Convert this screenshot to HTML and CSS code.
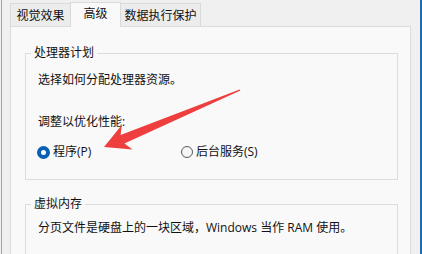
FILE: index.html
```html
<!DOCTYPE html>
<html lang="zh-CN">
<head>
<meta charset="utf-8">
<title>性能选项</title>
<link rel="stylesheet" href="styles.css">
</head>
<body>
<div class="window">
  <div class="tabs">
    <div class="tab tab-a">视觉效果</div>
    <div class="tab tab-b selected">高级</div>
    <div class="tab tab-c">数据执行保护</div>
  </div>
  <div class="panel">
    <fieldset class="group group-cpu">
      <legend>处理器计划</legend>
      <p class="desc">选择如何分配处理器资源。</p>
      <p class="label">调整以优化性能:</p>
      <div class="radios">
        <div class="radio first"><span class="dot checked"></span><span>程序(P)</span></div>
        <div class="radio"><span class="dot"></span><span>后台服务(S)</span></div>
      </div>
    </fieldset>
    <fieldset class="group group-mem">
      <legend>虚拟内存</legend>
      <p class="desc2">分页文件是硬盘上的一块区域，Windows 当作 RAM 使用。</p>
    </fieldset>
  </div>
</div>
<svg class="arrow" width="422" height="254" viewBox="0 0 422 254" aria-hidden="true">
  <polygon points="104,147 132.5,149.5 124.4,143.4 240.4,90.6 239.6,89.4 120.6,135.1 121.8,125" fill="#ef3e3e"/>
</svg>
</body>
</html>
```

FILE: styles.css
```css
html, body {
  margin: 0;
  padding: 0;
  background: #f0f0f0;
}
body {
  font-family: "Open Sans", "Noto Sans CJK SC", sans-serif;
  font-size: 12px;
  line-height: 16px;
  color: #111;
  width: 422px;
  height: 254px;
  overflow: hidden;
}
.window {
  margin-left: 1px;
  border-left: 1px solid #8fa9c6;
  border-right: 2px solid #1e6cb0;
  padding: 2px 9px 0 8px;
  height: 252px;
  display: flex;
  flex-direction: column;
  overflow: hidden;
}
.tabs {
  display: flex;
  align-items: flex-end;
  height: 24px;
  flex: 0 0 24px;
}
.tab {
  box-sizing: border-box;
  height: 23px;
  padding-top: 4px;
  border: 1px solid #dadada;
  border-bottom: none;
  background: #ececec;
  text-align: center;
  margin-right: -1px;
  white-space: nowrap;
}
.tab-a { width: 61px; }
.tab-b { width: 51px; }
.tab-c { width: 81px; }
.tab.selected {
  height: 25px;
  padding-top: 3px;
  margin-bottom: -1px;
  background: #f9f9f9;
  position: relative;
  z-index: 1;
}
.panel {
  flex: 1;
  border: 1px solid #dcdcdc;
  background: #f9f9f9;
  padding: 18px 12px 0 14px;
}
.group {
  margin: 0;
  border: 1px solid #dcdcdc;
  padding: 0 12px 19px 12px;
}
.group legend {
  padding: 0 3px;
  margin-left: -7px;
  line-height: 16px;
}
.group-mem {
  margin-top: 16px;
  padding-bottom: 40px;
}
.desc {
  margin: 11px 0 0 0;
}
.label {
  margin: 26px 0 0 0;
}
.desc2 {
  margin: 8px 0 0 0;
}
.radios {
  display: flex;
  margin-top: 14px;
  height: 16px;
}
.radio {
  display: flex;
  align-items: center;
  gap: 3px;
}
.radio.first {
  flex: 0 0 144px;
  margin-left: -1px;
}
.dot {
  box-sizing: border-box;
  width: 12px;
  height: 12px;
  border-radius: 50%;
  border: 1px solid #5c5c5c;
  background: #f6f6f6;
  flex: 0 0 auto;
}
.dot.checked {
  width: 13px;
  height: 13px;
  border: 4px solid #0a5fb4;
  background: #ffffff;
}
.arrow {
  position: absolute;
  left: 0;
  top: 0;
  pointer-events: none;
}
```
